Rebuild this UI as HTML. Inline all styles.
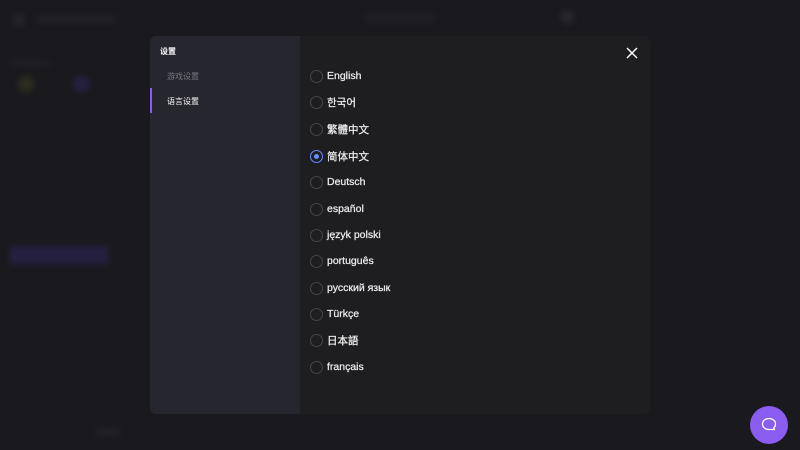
<!DOCTYPE html>
<html><head><meta charset="utf-8"><style>
*{margin:0;padding:0;box-sizing:border-box}
body{width:800px;height:450px;overflow:hidden;background:#1a1a1e;font-family:"Liberation Sans","Noto Sans CJK SC",sans-serif;position:relative}
.bg{position:absolute;filter:blur(3px)}
.modal{position:absolute;left:150px;top:36px;width:500px;height:378px;border-radius:6px;overflow:hidden;background:#1e1e21}
.left{position:absolute;left:0;top:0;width:150px;height:100%;background:#26262e}
.title{position:absolute;left:10px;top:10px;color:#fff;font-size:8px;font-weight:bold}
.it{position:absolute;left:17px;font-size:8px}
.bar{position:absolute;left:0;top:52px;width:2px;height:25px;background:#8a5cf6}
.row{position:absolute;left:160px;height:14px;display:flex;align-items:center;color:#ececec;font-size:10.5px;-webkit-text-stroke:0.25px #ececec}
.r{width:13px;height:13px;border:1px solid #45454c;border-radius:50%;margin-right:4px;position:relative;flex:none}
.r.on{border-color:#6b8cff}
.r.on::after{content:"";position:absolute;left:3px;top:3px;width:5px;height:5px;border-radius:50%;background:#6b8cff}
</style></head><body>
<div class="bg" style="left:12px;top:13px;width:14px;height:14px;border-radius:50%;background:#222227"></div>
<div class="bg" style="left:36px;top:15px;width:80px;height:8px;background:#202025"></div>
<div class="bg" style="left:10px;top:60px;width:40px;height:6px;background:#202025"></div>
<div class="bg" style="left:18px;top:76px;width:16px;height:16px;border-radius:50%;background:#2e2c1e"></div>
<div class="bg" style="left:72px;top:76px;width:18px;height:16px;border-radius:50%;background:#252040"></div>
<div class="bg" style="left:10px;top:246px;width:98px;height:18px;background:#252040"></div>
<div class="bg" style="left:95px;top:428px;width:25px;height:8px;background:#202025"></div>
<div class="bg" style="left:560px;top:10px;width:14px;height:14px;border-radius:50%;background:#26262b"></div>
<div class="bg" style="left:365px;top:13px;width:70px;height:10px;background:#1f1f24"></div>
<div class="modal">
<div class="left">
<div class="title">设置</div>
<div class="it" style="top:35px;color:#77777f">游戏设置</div>
<div class="bar"></div>
<div class="it" style="top:60px;color:#fff">语言设置</div>
</div>
<div class="row" style="top:33px"><span class="r"></span>English</div>
<div class="row" style="top:59px"><span class="r"></span>한국어</div>
<div class="row" style="top:86px"><span class="r"></span>繁體中文</div>
<div class="row" style="top:113px"><span class="r on"></span>简体中文</div>
<div class="row" style="top:139px"><span class="r"></span>Deutsch</div>
<div class="row" style="top:166px"><span class="r"></span>español</div>
<div class="row" style="top:192px"><span class="r"></span>język polski</div>
<div class="row" style="top:218px"><span class="r"></span>português</div>
<div class="row" style="top:245px"><span class="r"></span>русский язык</div>
<div class="row" style="top:271px"><span class="r"></span>Türkçe</div>
<div class="row" style="top:297px"><span class="r"></span>日本語</div>
<div class="row" style="top:324px"><span class="r"></span>français</div>
<svg style="position:absolute;left:476px;top:11px" width="12" height="12" viewBox="0 0 12 12"><path d="M1 1L11 11M11 1L1 11" stroke="#fff" stroke-width="1.5"/></svg>
</div>
<div style="position:absolute;left:750px;top:406px;width:38px;height:38px;border-radius:50%;background:#8b5cf0"></div>
<svg style="position:absolute;left:760px;top:416px" width="18" height="18" viewBox="0 0 18 18"><path d="M9 2.5C5.3 2.5 2.5 4.8 2.5 8S5.3 13.5 9 13.5H14.5L13.6 12C14.8 11 15.5 9.6 15.5 8C15.5 4.8 12.7 2.5 9 2.5Z" fill="none" stroke="#fff" stroke-width="1.3" stroke-linejoin="round"/></svg>
</body></html>
